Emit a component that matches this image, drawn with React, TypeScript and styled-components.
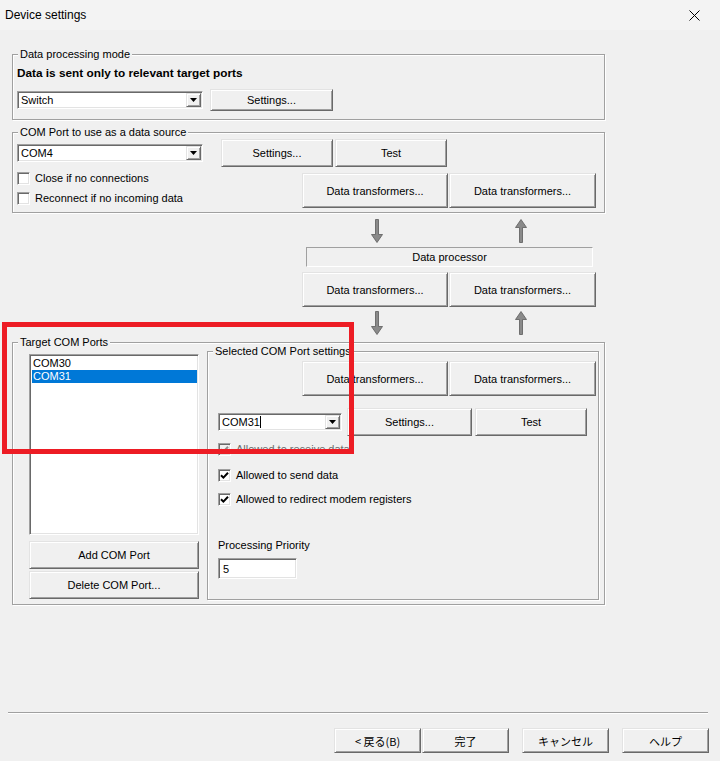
import styled, { createGlobalStyle, css } from 'styled-components'

const GlobalStyle = createGlobalStyle`
  html, body {
    margin: 0;
    padding: 0;
    background: #f0f0f0;
  }
  * { box-sizing: border-box; }
`

const raised = css`
  border: 1px solid;
  border-color: #e3e3e3 #696969 #696969 #e3e3e3;
  box-shadow: inset 1px 1px 0 #fff, inset -1px -1px 0 #a0a0a0;
`

const sunken = css`
  border: 1px solid;
  border-color: #a0a0a0 #fff #fff #a0a0a0;
  box-shadow: inset 1px 1px 0 #696969, inset -1px -1px 0 #e3e3e3;
`

const Window = styled.div`
  position: relative;
  width: 720px;
  height: 761px;
  display: flex;
  flex-direction: column;
  background: #f0f0f0;
  font-family: "Liberation Sans", Arial, sans-serif;
  font-size: 11px;
  color: #000;
  overflow: hidden;
`

const TitleBar = styled.div`
  height: 30px;
  flex: none;
  display: flex;
  align-items: center;
  justify-content: space-between;
  padding: 0 20px 0 5px;
  background: #f3f3f3;
  font-size: 12px;
`

const Body = styled.div`
  flex: 1;
  display: flex;
  flex-direction: column;
`

const Group = styled.div<{ $mt: number; $h: number }>`
  position: relative;
  margin: ${p => p.$mt}px 0 0 12px;
  width: 593px;
  height: ${p => p.$h}px;
  border: 1px solid #a0a0a0;
  box-shadow: 1px 1px 0 #fff, inset 1px 1px 0 #fff;
`

const SubGroup = styled.div`
  position: relative;
  margin-top: -3px;
  width: 392px;
  height: 249px;
  border: 1px solid #a0a0a0;
  box-shadow: 1px 1px 0 #fff, inset 1px 1px 0 #fff;
  display: flex;
  flex-direction: column;
  padding: 9px 0 0 10px;
`

const Legend = styled.span`
  position: absolute;
  top: -7px;
  left: 5px;
  padding: 0 2px;
  line-height: 13px;
  background: #f0f0f0;
`

const BoldLine = styled.div`
  margin: 11px 0 0 4px;
  font-weight: bold;
  font-size: 11.8px;
  line-height: 14px;
`

const Row = styled.div<{ $mt: number; $ml?: number; $h: number }>`
  display: flex;
  align-items: center;
  height: ${p => p.$h}px;
  margin: ${p => p.$mt}px 0 0 ${p => p.$ml ?? 0}px;
`

const Button = styled.button<{ $w: number; $h: number; $ml?: number; $mt?: number; $cjk?: boolean }>`
  ${raised};
  flex: none;
  width: ${p => p.$w}px;
  height: ${p => p.$h}px;
  margin: ${p => p.$mt ?? 0}px 0 0 ${p => p.$ml ?? 0}px;
  padding: 0;
  background: #f0f0f0;
  color: #000;
  font-family: ${p => (p.$cjk ? '"Noto Sans CJK JP", "Liberation Sans", sans-serif' : '"Liberation Sans", Arial, sans-serif')};
  font-size: 11px;
  white-space: pre;
  border-radius: 0;
`

const Combo = styled.div<{ $w: number }>`
  ${sunken};
  flex: none;
  width: ${p => p.$w}px;
  height: 18px;
  background: #fff;
  display: flex;
  align-items: center;
  padding: 1px 1px 1px 3px;
`

const ComboText = styled.span`
  flex: 1;
  line-height: 14px;
`

const Caret = styled.span`
  display: inline-block;
  width: 1px;
  height: 12px;
  background: #000;
  vertical-align: -2px;
`

const DropButton = styled.div`
  ${raised};
  width: 15px;
  height: 14px;
  display: flex;
  align-items: center;
  justify-content: center;
  background: #f0f0f0;
`

const SplitRow = styled.div`
  display: grid;
  grid-template-columns: 285px auto;
  margin: 6px 0 0 4px;
`

const CheckCol = styled.div`
  display: flex;
  flex-direction: column;
  gap: 6px;
  margin-top: -2px;
`

const CheckRow = styled.div<{ $mt?: number; $disabled?: boolean }>`
  display: flex;
  align-items: center;
  gap: 5px;
  height: 14px;
  margin-top: ${p => p.$mt ?? 0}px;
  color: ${p => (p.$disabled ? '#6d6d6d' : '#000')};
`

const Box = styled.span<{ $disabled?: boolean }>`
  ${sunken};
  width: 13px;
  height: 13px;
  display: flex;
  align-items: center;
  justify-content: center;
  background: ${p => (p.$disabled ? '#f0f0f0' : '#fff')};
`

const Pair = styled.div`
  display: flex;
  gap: 1px;
`

const Mid = styled.div`
  margin-left: 302px;
  width: 294px;
  display: flex;
  flex-direction: column;
`

const ArrowRow = styled.div<{ $mt: number }>`
  display: grid;
  grid-template-columns: 146px 146px;
  height: 24px;
  margin-top: ${p => p.$mt}px;
  padding-left: 2px;
  & > svg:last-child { margin-left: -4px; }
  & > svg { justify-self: center; }
`

const Processor = styled.div`
  margin: 4px 0 0 4px;
  width: 287px;
  height: 20px;
  border: 1px solid;
  border-color: #a0a0a0 #fff #fff #a0a0a0;
  display: flex;
  align-items: center;
  justify-content: center;
`

const TargetInner = styled.div`
  display: flex;
  align-items: flex-start;
  gap: 8px;
  padding: 11px 0 0 16px;
`

const LeftCol = styled.div`
  width: 170px;
  display: flex;
  flex-direction: column;
`

const ListBox = styled.div`
  ${sunken};
  height: 181px;
  background: #fff;
  padding: 2px 1px 0 2px;
`

const ListItem = styled.div<{ $sel?: boolean }>`
  line-height: 13px;
  padding-left: 1px;
  background: ${p => (p.$sel ? '#0078d7' : 'transparent')};
  color: ${p => (p.$sel ? '#fff' : '#000')};
`

const FieldLabel = styled.div`
  margin-top: 32px;
  line-height: 14px;
`

const NumberField = styled.div`
  ${sunken};
  margin-top: 6px;
  width: 79px;
  height: 21px;
  background: #fff;
  padding: 3px 0 0 4px;
  line-height: 14px;
`

const Footer = styled.div`
  flex: none;
  display: flex;
  flex-direction: column;
`

const Separator = styled.div`
  margin: 0 12px 0 8px;
  height: 2px;
  border-top: 1px solid #a0a0a0;
  border-bottom: 1px solid #fff;
`

const FooterButtons = styled.div`
  display: flex;
  justify-content: flex-end;
  padding-right: 11px;
  margin: 14px 0 8px;
`

const Highlight = styled.div`
  position: absolute;
  left: 2px;
  top: 322px;
  width: 352px;
  height: 132px;
  border: 5px solid #ed1c24;
  pointer-events: none;
`

const Tri = () => (
  <svg width="7" height="4" viewBox="0 0 7 4">
    <path d="M0 0H7L3.5 4Z" fill="#000" />
  </svg>
)

const Check = ({ color }: { color: string }) => (
  <svg width="9" height="9" viewBox="0 0 9 9">
    <path d="M1 4.2L3.4 6.6L8 1.8" stroke={color} strokeWidth="2" fill="none" />
  </svg>
)

const CheckBox = ({ label, checked, disabled, mt }: { label: string; checked?: boolean; disabled?: boolean; mt?: number }) => (
  <CheckRow $mt={mt} $disabled={disabled}>
    <Box $disabled={disabled}>{checked && <Check color={disabled ? '#8d8d8d' : '#000'} />}</Box>
    <span>{label}</span>
  </CheckRow>
)

const ComboBox = ({ w, value, caret }: { w: number; value: string; caret?: boolean }) => (
  <Combo $w={w}>
    <ComboText>
      {value}
      {caret && <Caret />}
    </ComboText>
    <DropButton>
      <Tri />
    </DropButton>
  </Combo>
)

const DownArrow = () => (
  <svg width="12" height="24" viewBox="0 0 12 24">
    <path d="M4.5 0.5H7.5V15.5H11.5L6 23.5L0.5 15.5H4.5Z" fill="#8a8a8a" stroke="#5a5a5a" strokeWidth="0.8" />
  </svg>
)

const UpArrow = () => (
  <svg width="12" height="24" viewBox="0 0 12 24">
    <path d="M6 0.5L11.5 8.5H7.5V23.5H4.5V8.5H0.5Z" fill="#8a8a8a" stroke="#5a5a5a" strokeWidth="0.8" />
  </svg>
)

const Transformers = () => (
  <Pair>
    <Button $w={146} $h={35}>Data transformers...</Button>
    <Button $w={147} $h={35}>Data transformers...</Button>
  </Pair>
)

export default function App() {
  return (
    <Window>
      <GlobalStyle />
      <TitleBar>
        <span>Device settings</span>
        <svg width="11" height="11" viewBox="0 0 11 11">
          <path d="M0.5 0.5L10.5 10.5M10.5 0.5L0.5 10.5" stroke="#000" strokeWidth="1" />
        </svg>
      </TitleBar>
      <Body>
        <Group $mt={24} $h={66}>
          <Legend>Data processing mode</Legend>
          <BoldLine>Data is sent only to relevant target ports</BoldLine>
          <Row $mt={9} $ml={4} $h={22}>
            <ComboBox w={186} value="Switch" />
            <Button $w={123} $h={22} $ml={7}>Settings...</Button>
          </Row>
        </Group>

        <Group $mt={12} $h={81}>
          <Legend>COM Port to use as a data source</Legend>
          <Row $mt={6} $ml={4} $h={28}>
            <ComboBox w={186} value="COM4" />
            <Button $w={112} $h={28} $ml={18}>Settings...</Button>
            <Button $w={112} $h={28} $ml={2}>Test</Button>
          </Row>
          <SplitRow>
            <CheckCol>
              <CheckBox label="Close if no connections" />
              <CheckBox label="Reconnect if no incoming data" />
            </CheckCol>
            <Transformers />
          </SplitRow>
        </Group>

        <Mid>
          <ArrowRow $mt={6}>
            <DownArrow />
            <UpArrow />
          </ArrowRow>
          <Processor>Data processor</Processor>
          <Row $mt={5} $h={35}>
            <Transformers />
          </Row>
          <ArrowRow $mt={4}>
            <DownArrow />
            <UpArrow />
          </ArrowRow>
        </Mid>

        <Group $mt={7} $h={263}>
          <Legend>Target COM Ports</Legend>
          <TargetInner>
            <LeftCol>
              <ListBox>
                <ListItem>COM30</ListItem>
                <ListItem $sel>COM31</ListItem>
              </ListBox>
              <Button $w={170} $h={28} $mt={6}>Add COM Port</Button>
              <Button $w={170} $h={28} $mt={2}>Delete COM Port...</Button>
            </LeftCol>
            <SubGroup>
              <Legend>Selected COM Port settings</Legend>
              <Row $mt={0} $ml={84} $h={35}>
                <Transformers />
              </Row>
              <Row $mt={12} $h={28}>
                <ComboBox w={124} value="COM31" caret />
                <Button $w={125} $h={28} $ml={5}>Settings...</Button>
                <Button $w={112} $h={28} $ml={3}>Test</Button>
              </Row>
              <CheckBox label="Allowed to receive data" checked disabled mt={6} />
              <CheckBox label="Allowed to send data" checked mt={12} />
              <CheckBox label="Allowed to redirect modem registers" checked mt={10} />
              <FieldLabel>Processing Priority</FieldLabel>
              <NumberField>5</NumberField>
            </SubGroup>
          </TargetInner>
        </Group>
      </Body>

      <Footer>
        <Separator />
        <FooterButtons>
          <Button $w={87} $h={25} $cjk>{'< 戻る(B)'}</Button>
          <Button $w={87} $h={25} $ml={1} $cjk>完了</Button>
          <Button $w={87} $h={25} $ml={13} $cjk>キャンセル</Button>
          <Button $w={87} $h={25} $ml={13} $cjk>ヘルプ</Button>
        </FooterButtons>
      </Footer>

      <Highlight />
    </Window>
  )
}
